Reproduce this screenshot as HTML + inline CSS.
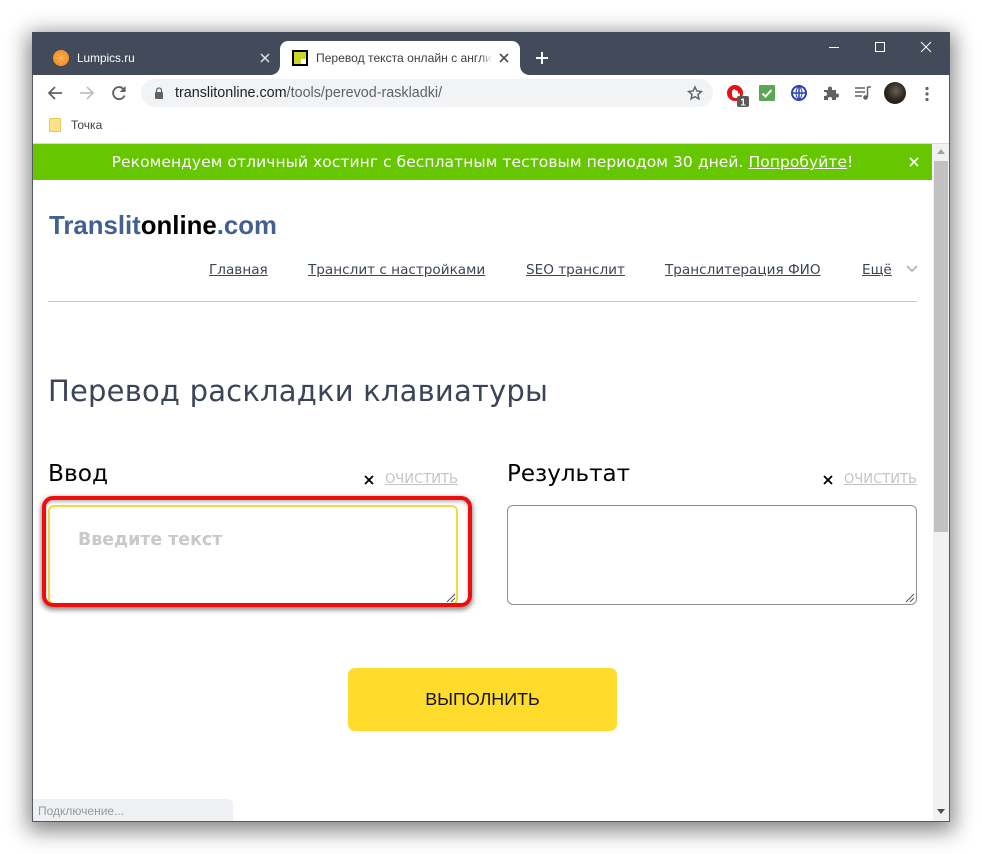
<!DOCTYPE html>
<html lang="ru"><head><meta charset="utf-8"><title>Перевод раскладки клавиатуры</title>
<style>
html,body{margin:0;padding:0;width:982px;height:854px;overflow:hidden;background:#fff}
*{box-sizing:border-box}
.a{position:absolute;white-space:nowrap}
.ui{font-family:"Liberation Sans",sans-serif}
.dj{font-family:"DejaVu Sans",sans-serif}
u{text-decoration:underline}
</style></head>
<body>
<div class="a" style="left:33px;top:33px;width:916px;height:788px;box-shadow:0 5px 20px 5px rgba(0,0,0,.48)"></div>
<div class="a" style="left:32px;top:32px;width:918px;height:790px;background:#fff;border:1px solid #555a62;border-top:0;overflow:hidden">
</div>
<!-- title bar -->
<div class="a" style="left:32px;top:32px;width:918px;height:43px;background:#434a59"></div>
<!-- active tab -->
<div class="a" style="left:280px;top:41px;width:240px;height:34px;background:#fff;border-radius:8px 8px 0 0"></div>
<svg class="a" style="left:270px;top:65px" width="260" height="10"><path d="M0 10h10V0C10 6 6 10 0 10zM260 10h-10V0c0 6 4 10 10 10z" fill="#fff"/></svg>
<!-- favicons -->
<svg class="a" style="left:53px;top:50px" width="16" height="16" viewBox="0 0 16 16"><circle cx="8" cy="8" r="8" fill="#f5962a"/><path d="M8 2v12M2 8h12M4 4l8 8M12 4l-8 8" stroke="#fbbf72" stroke-width=".7"/></svg>
<div class="a ui" style="left:77px;top:50px;font-size:11.800px;line-height:16px;color:#fff">Lumpics.ru</div>
<svg class="a" style="left:260px;top:53px" width="10" height="10"><path d="M1 1l8 8M9 1L1 9" stroke="#dfe1e5" stroke-width="1.500"/></svg>
<div class="a" style="left:292px;top:50px;width:16px;height:16px;background:#c9d62b;border:2px solid #000"></div>
<div class="a" style="left:301px;top:59px;width:5px;height:5px;background:#fff"></div>
<div class="a ui" style="left:316px;top:50px;width:176px;overflow:hidden;font-size:12.100px;line-height:16px;color:#3c4043">Перевод текста онлайн с англи</div>
<div class="a" style="left:480px;top:48px;width:12px;height:20px;background:linear-gradient(90deg,rgba(255,255,255,0),#fff)"></div>
<svg class="a" style="left:499px;top:53px" width="10" height="10"><path d="M1 1l8 8M9 1L1 9" stroke="#4a4d52" stroke-width="1.600"/></svg>
<svg class="a" style="left:535px;top:51px" width="14" height="14"><path d="M7 1v12M1 7h12" stroke="#fff" stroke-width="2"/></svg>
<!-- window controls -->
<div class="a" style="left:829px;top:47px;width:10px;height:1px;background:#fff"></div>
<div class="a" style="left:875px;top:42px;width:10px;height:10px;border:1px solid #fff"></div>
<svg class="a" style="left:920px;top:41px" width="12" height="12"><path d="M1 1l10 10M11 1L1 11" stroke="#fff" stroke-width="1"/></svg>
<!-- toolbar -->
<svg class="a" style="left:47px;top:85px" width="16" height="16" viewBox="0 0 16 16"><path d="M15 8H2M8 2L2 8l6 6" fill="none" stroke="#5f6368" stroke-width="1.800"/></svg>
<svg class="a" style="left:79px;top:85px" width="16" height="16" viewBox="0 0 16 16"><path d="M1 8h13M8 2l6 6-6 6" fill="none" stroke="#bdc1c6" stroke-width="1.800"/></svg>
<svg class="a" style="left:111px;top:85px" width="16" height="16" viewBox="0 0 16 16"><path d="M13.600 10.500A6 6 0 1 1 12.300 3.800" fill="none" stroke="#5f6368" stroke-width="1.900"/><path d="M14.600 1v6h-6z" fill="#5f6368"/></svg>
<div class="a" style="left:141px;top:79px;width:572px;height:28px;background:#f1f3f4;border-radius:14px"></div>
<svg class="a" style="left:154px;top:87px" width="10" height="12" viewBox="0 0 10 12"><path d="M2.500 5V3.500a2.500 2.500 0 0 1 5 0V5" fill="none" stroke="#5f6368" stroke-width="1.200"/><rect x="1" y="5" width="8" height="7" rx="1" fill="#5f6368"/></svg>
<div class="a ui" style="left:175px;top:85px;font-size:14.350px;line-height:16px;color:#202124">translitonline.com<span style="color:#5f6368">/tools/perevod-raskladki/</span></div>
<svg class="a" style="left:687px;top:85px" width="16" height="16" viewBox="0 0 24 24"><path d="M12 3l2.800 6 6.700.8-5 4.500 1.400 6.600L12 17.500 6.100 20.900l1.400-6.600-5-4.500 6.700-.8z" fill="none" stroke="#5f6368" stroke-width="2.200"/></svg>
<!-- extensions -->
<svg class="a" style="left:726px;top:84px" width="24" height="24" viewBox="0 0 24 24"><circle cx="9" cy="9" r="8" fill="#e41313"/><path d="M6 12V6.500h1.500V5h1.500v1h1.500v1H12v2.500h2V14H8z" fill="#fff"/><rect x="11" y="12" width="12" height="11" rx="2" fill="#5a5a5a"/><text x="17" y="21.500" font-family="Liberation Sans,sans-serif" font-size="10" font-weight="700" fill="#fff" text-anchor="middle">1</text></svg>
<div class="a" style="left:759px;top:85px;width:16px;height:16px;background:#5aa755;border-radius:1px"></div>
<svg class="a" style="left:759px;top:85px" width="16" height="16"><path d="M3.500 8.500l3 3 6-6.500" fill="none" stroke="#fff" stroke-width="2"/></svg>
<svg class="a" style="left:791px;top:85px" width="16" height="16" viewBox="0 0 16 16"><circle cx="8" cy="8" r="7" fill="#fff" stroke="#2a3fb5" stroke-width="2"/><path d="M8 1v14M1 8h14" stroke="#2a3fb5" stroke-width="1.500"/><path d="M8 1C4 5 4 11 8 15M8 1c4 4 4 10 0 14" fill="none" stroke="#2a3fb5" stroke-width="1"/></svg>
<svg class="a" style="left:823px;top:85px" width="16" height="16" viewBox="0 0 16 16"><path d="M1 5h4V3.500a2 2 0 0 1 4 0V5h4v3.500h1a2 2 0 0 1 0 4h-1V15H9v-1a2 2 0 0 0-4 0v1H1v-4h1a2 2 0 0 0 0-4H1z" fill="#5f6368"/></svg>
<svg class="a" style="left:855px;top:85px" width="16" height="16" viewBox="0 0 16 16"><path d="M0 3h10M0 7h10M0 11h7" stroke="#5f6368" stroke-width="1.400"/><path d="M12.500 2v10" stroke="#5f6368" stroke-width="1.500"/><path d="M12.500 2H16" stroke="#5f6368" stroke-width="1.500"/><circle cx="10.500" cy="12.500" r="2.300" fill="#5f6368"/></svg>
<div class="a" style="left:884px;top:82px;width:22px;height:22px;border-radius:50%;background:radial-gradient(circle at 55% 40%,#6b5f53 0,#2e2722 50%,#14100e 100%)"></div>
<svg class="a" style="left:924px;top:86px" width="6" height="16"><circle cx="3" cy="2.500" r="1.600" fill="#5f6368"/><circle cx="3" cy="8" r="1.600" fill="#5f6368"/><circle cx="3" cy="13.500" r="1.600" fill="#5f6368"/></svg>
<!-- bookmarks -->
<div class="a" style="left:49px;top:118px;width:12px;height:14px;background:#fce08a;border:1px solid #e9c65f;border-radius:1px"></div>
<div class="a ui" style="left:71px;top:117px;font-size:12px;line-height:16px;color:#3c4043">Точка</div>
<div class="a" style="left:33px;top:143px;width:916px;height:1px;background:#d9dbdd"></div>
<!-- banner -->
<div class="a" style="left:33px;top:144px;width:899px;height:36px;background:#66c600"></div>
<div class="a dj" style="left:33px;top:153px;width:899px;text-align:center;font-size:15.500px;line-height:19px;color:#fff;letter-spacing:.06px">Рекомендуем отличный хостинг с бесплатным тестовым периодом 30 дней. <u>Попробуйте</u>!</div>
<svg class="a" style="left:909px;top:157px" width="10" height="10"><path d="M1 1l8 8M9 1L1 9" stroke="#fff" stroke-width="1.700"/></svg>
<!-- scrollbar -->
<div class="a" style="left:933px;top:144px;width:16px;height:677px;background:#f1f1f1"></div>
<div class="a" style="left:934px;top:161px;width:14px;height:371px;background:#c1c1c1"></div>
<svg class="a" style="left:936px;top:149px" width="10" height="6"><path d="M5 0l4 5H1z" fill="#a3a3a3"/></svg>
<svg class="a" style="left:936px;top:809px" width="10" height="6"><path d="M1 0h8L5 5z" fill="#505050"/></svg>
<!-- logo -->
<div class="a ui" style="left:49px;top:211px;font-size:25.800px;line-height:30px;font-weight:700;color:#43608f">Translit<span style="color:#000">online</span>.com</div>
<!-- nav -->
<div class="a dj" style="left:209px;top:261px;font-size:13.600px;line-height:18px;color:#3b4557;text-decoration:underline">Главная</div>
<div class="a dj" style="left:308px;top:261px;font-size:13.600px;line-height:18px;color:#3b4557;text-decoration:underline">Транслит с настройками</div>
<div class="a dj" style="left:526px;top:261px;font-size:13.600px;line-height:18px;color:#3b4557;text-decoration:underline">SEO транслит</div>
<div class="a dj" style="left:665px;top:261px;font-size:13.600px;line-height:18px;color:#3b4557;text-decoration:underline">Транслитерация ФИО</div>
<div class="a dj" style="left:862px;top:261px;font-size:13.600px;line-height:18px;color:#3b4557;text-decoration:underline">Ещё</div>
<svg class="a" style="left:906px;top:265px" width="12" height="8"><path d="M1 1l5 5 5-5" fill="none" stroke="#b5b8bd" stroke-width="1.800"/></svg>
<div class="a" style="left:48px;top:301px;width:869px;height:1px;background:#eed900"></div>
<!-- heading -->
<div class="a dj" style="left:48px;top:373px;font-size:29px;line-height:36px;color:#3b4557;letter-spacing:.2px">Перевод раскладки клавиатуры</div>
<div class="a dj" style="left:48px;top:459px;font-size:23.300px;line-height:30px;color:#000">Ввод</div>
<div class="a dj" style="left:507px;top:459px;font-size:23px;line-height:30px;color:#000">Результат</div>
<svg class="a" style="left:364px;top:475px" width="10" height="10"><path d="M1 1l8 8M9 1L1 9" stroke="#000" stroke-width="1.800"/></svg>
<div class="a dj" style="left:385px;top:471px;font-size:13.100px;line-height:18px;color:#c4c4c4;text-decoration:underline">ОЧИСТИТЬ</div>
<svg class="a" style="left:823px;top:475px" width="10" height="10"><path d="M1 1l8 8M9 1L1 9" stroke="#000" stroke-width="1.800"/></svg>
<div class="a dj" style="left:844px;top:471px;font-size:13.100px;line-height:18px;color:#c4c4c4;text-decoration:underline">ОЧИСТИТЬ</div>
<!-- textareas -->
<div class="a" style="left:48px;top:505px;width:410px;height:100px;border:2px solid #f3d84a;border-radius:6px;background:#fff"></div>
<div class="a dj" style="left:78px;top:529px;font-size:17.400px;line-height:22px;font-weight:700;color:#c9c9c9">Введите текст</div>
<svg class="a" style="left:446px;top:593px" width="10" height="10"><path d="M1 9l8-8M5 9l4-4" stroke="#555" stroke-width="1"/></svg>
<div class="a" style="left:507px;top:505px;width:410px;height:100px;border:1px solid #8f8f8f;border-radius:6px;background:#fff"></div>
<svg class="a" style="left:905px;top:593px" width="10" height="10"><path d="M1 9l8-8M5 9l4-4" stroke="#555" stroke-width="1"/></svg>
<!-- red highlight -->
<div class="a" style="left:42px;top:496px;width:430px;height:111px;border:4.500px solid #ee0c0c;border-radius:11px;box-shadow:0 2px 5px 1px rgba(0,0,0,.45),inset 0 2px 3px rgba(0,0,0,.28)"></div>
<!-- button -->
<div class="a" style="left:348px;top:668px;width:269px;height:63px;background:#ffdc2b;border-radius:7px"></div>
<div class="a ui" style="left:348px;top:688px;width:269px;text-align:center;font-size:17.900px;line-height:23px;color:#111">ВЫПОЛНИТЬ</div>
<!-- status -->
<div class="a" style="left:33px;top:799px;width:200px;height:22px;background:#eef0f3;border-radius:0 5px 0 0"></div>
<div class="a ui" style="left:38px;top:804px;font-size:12px;line-height:15px;color:#96999e">Подключение...</div>
</body></html>
